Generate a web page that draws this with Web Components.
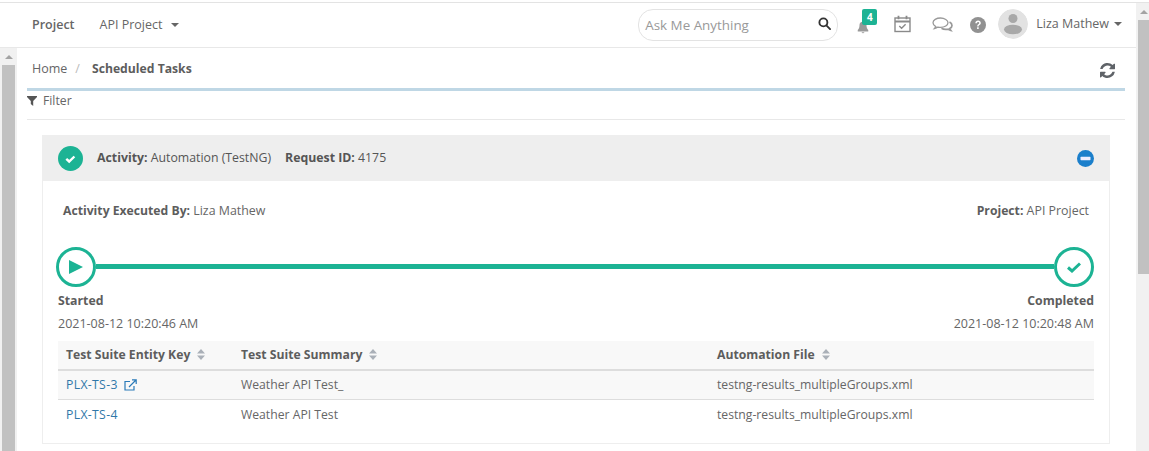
<!DOCTYPE html>
<html><head><meta charset="utf-8"><title>Scheduled Tasks</title>
<style>
html,body{margin:0;padding:0;height:451px;overflow:hidden;background:#fff}
body{font:12.2px/1.4 "Open Sans",sans-serif;color:#666}
</style></head><body>
<app-shell></app-shell>
<script>
function def(name,html){
  customElements.define(name,class extends HTMLElement{
    constructor(){super();this.attachShadow({mode:'open'}).innerHTML=html;}
  });
}
def('scroll-bar',`<style>
:host{display:flex;flex-direction:column;align-items:center;background:#f1f1f1;width:var(--w,13px);flex:none;box-sizing:border-box;padding:var(--p,0 2px)}
.arrow{height:17px;flex:none;display:flex;align-items:center;justify-content:center}
.arrow i{border:4px solid transparent;border-top:0;border-bottom:4px solid #a3a3a3;width:0;height:0;display:block}
.thumb{background:#c1c1c1;width:100%;height:var(--h,100px)}
</style><div class="arrow"><i></i></div><div class="thumb"></div>`);

def('top-bar',`<style>
:host{display:flex;align-items:center;height:44px;border-bottom:1px solid #e8e8e8;box-sizing:content-box;color:#666;font-size:12.5px}
b{font-weight:600;margin-left:32px;color:#666}
.proj{margin-left:25px;display:flex;align-items:center;gap:8px}
.caret{width:0;height:0;border:4px solid transparent;border-top:4px solid #666;border-bottom:0;display:block}
.sp{flex:1}
.search{width:192px;height:30px;border:1px solid #e3e3e3;border-radius:15px;display:flex;align-items:center;padding:0 0 0 6px;font-size:13.4px;color:#999;justify-content:space-between;box-sizing:content-box}
.search svg{margin-right:6px;margin-top:-3px}
.bell{position:relative;margin-left:18px;width:14px;height:14px;margin-top:4px}
.bell svg{display:block}
.badge{position:absolute;left:6px;top:-11px;width:15px;height:16px;background:#1cb394;color:#fff;font-size:10px;font-weight:700;border-radius:2px;text-align:center;line-height:16px}
.avatar{width:30px;height:30px;border-radius:50%;margin-left:12px;margin-bottom:2px;display:block}
.user{margin-left:8px;display:flex;align-items:center;gap:5px;margin-right:14px;margin-bottom:2px}
</style>
<b>Project</b>
<span class="proj">API Project <i class="caret"></i></span>
<span class="sp"></span>
<span class="search"><span>Ask Me Anything</span>
<svg width="13" height="13" viewBox="0 0 14 14" fill="none" stroke="#333" stroke-width="2"><circle cx="5.800" cy="5.800" r="4.300"/><path d="M9 9l4 4" stroke-linecap="round"/></svg></span>
<span class="bell"><svg width="14" height="14" viewBox="0 0 16 16" fill="#999"><path d="M8 1c-.6 0-1 .4-1 1C4.800 2.500 4 4 4 6c0 3-1 4.500-2 5.500V13h12v-1.500C13 10.500 12 9 12 6c0-2-.8-3.500-3-4 0-.6-.4-1-1-1zM6.300 14a1.800 1.800 0 0 0 3.400 0z"/></svg><span class="badge">4</span></span>
<svg style="margin-left:24px;margin-bottom:2px;display:block" width="17" height="18" viewBox="0 0 17 18" fill="none" stroke="#8a8a8a" stroke-width="1.400"><rect x="1" y="3" width="15" height="13.500"/><path d="M1 6.500h15" stroke-width="2"/><path d="M4.500 .8v3.400M12.500 .8v3.400" stroke-width="1.800"/><path d="M5.300 11l2.300 2.300 4-4"/></svg>
<svg style="margin-left:21px;margin-bottom:1px;display:block" width="21" height="16" viewBox="0 0 21 16" fill="none" stroke="#999" stroke-width="1.300"><path d="M8.500 1C4.400 1 1 3.100 1 5.800c0 1.600 1.100 2.900 2.800 3.800-.3.800-.7 1.300-1.300 1.900 1.300-.2 2.500-.7 3.400-1.400.8.200 1.700.3 2.600.3 4.100 0 7.500-2.100 7.500-4.600S12.600 1 8.500 1z"/><path d="M17.500 5c1.500.8 2.500 2 2.500 3.400 0 1.300-.9 2.500-2.300 3.200.2.700.5 1.200 1 1.800-1.100-.2-2.100-.6-2.800-1.200-.7.200-1.400.2-2.100.2-1.700 0-3.200-.4-4.300-1.100" stroke-width="1.700"/></svg>
<svg style="margin-left:17px;display:block" width="16" height="16" viewBox="0 0 16 16"><circle cx="8" cy="8" r="8" fill="#919191"/><path d="M5.300 6.200C5.400 4.600 6.500 3.600 8.100 3.600c1.600 0 2.700 1 2.700 2.300 0 1-.6 1.600-1.300 2.100-.7.500-.9.700-.9 1.500H7.200c0-1.200.3-1.800 1.100-2.300.6-.4.900-.7.900-1.200 0-.6-.5-1-1.100-1-.7 0-1.100.4-1.200 1.200zM7.100 10.300h1.600v1.800H7.100z" fill="#fff"/></svg>
<svg class="avatar" viewBox="0 0 30 30"><circle cx="15" cy="15" r="15" fill="#e2e2e2"/><circle cx="15" cy="9.500" r="4.500" fill="#a8a8a8"/><ellipse cx="15" cy="20.500" rx="9" ry="4.800" fill="#a8a8a8"/></svg>
<span class="user">Liza Mathew <i class="caret"></i></span>`);

def('bread-crumb',`<style>
:host{display:flex;align-items:center;height:39px;padding:1px 10px 0 5px;border-bottom:3px solid #bfd7e5;color:#666;font-size:12.5px}
.sep{color:#bbb;margin:0 12px 0 8px}
b{font-weight:700;color:#5d5d5d;font-size:12.2px}
.sp{flex:1}
svg{display:block;margin-top:3px}
</style><span>Home</span><span class="sep">/</span><b>Scheduled Tasks</b><span class="sp"></span>
<svg width="15" height="15" viewBox="0 0 1536 1536" fill="#5f6368"><path d="M1511 928q0 5-1 7-64 268-268 434.500T764 1536q-146 0-282.500-55T238 1324l-129 129q-19 19-45 19t-45-19-19-45V960q0-26 19-45t45-19h448q26 0 45 19t19 45-19 45L420 1142q71 66 161 102t187 36q134 0 250-65t186-179q11-17 53-117 8-23 30-23h192q13 0 22.500 9.500t9.500 22.500zM1536 128v448q0 26-19 45t-45 19h-448q-26 0-45-19t-19-45 19-45l138-138q-148-137-349-137-134 0-250 65T332 480q-11 17-53 117-8 23-30 23H50q-13 0-22.500-9.500T18 588v-7q65-268 270-434.500T768 0q146 0 284 55.500T1297 212l130-129q19-19 45-19t45 19 19 45z"/></svg>`);

def('filter-bar',`<style>
:host{display:flex;gap:6px;height:29px;border-bottom:1px solid #e8e8e8;box-sizing:border-box;color:#666;font-size:12.2px;align-items:flex-start;padding-top:1px}
svg{margin-top:4px;display:block}
</style><svg width="10" height="10" viewBox="0 0 10 10" fill="#555"><path d="M0 0h10v1L6.200 5v5L3.800 8V5L0 1z"/></svg><span>Filter</span>`);

def('activity-head',`<style>
:host{display:flex;align-items:center;height:46px;background:#eeeeee;padding:0 15px;color:#555;font-size:12.3px}
b{font-weight:700;color:#555}
.chk{margin-right:14px;display:block}
.gap{margin-left:14px}
.sp{flex:1}
</style><svg class="chk" width="25" height="25" viewBox="0 0 25 25"><circle cx="12.500" cy="12.500" r="12.500" fill="#1cb394"/><path d="M8.300 12.800l2.900 2.700 5.200-5" fill="none" stroke="#fff" stroke-width="2.400"/></svg>
<span><b>Activity:</b> Automation (TestNG)</span><span class="gap"><b>Request ID:</b> 4175</span><span class="sp"></span>
<svg width="17" height="17" viewBox="0 0 17 17"><circle cx="8.500" cy="8.500" r="8.500" fill="#1b7fcb"/><rect x="3.500" y="6.800" width="10" height="3.400" rx=".6" fill="#eef"/></svg>`);

def('time-line',`<style>
:host{display:block;color:#666;font-size:12.5px}
.track{display:flex;align-items:center;margin-left:-2px}
.node{width:34px;height:34px;border:3px solid #1cb394;border-radius:50%;background:#fff;flex:none;display:flex;align-items:center;justify-content:center}
.bar{flex:1;height:5px;background:#1cb394;margin-bottom:1px}
.labels,.dates{display:flex;justify-content:space-between}
.labels{font-weight:700;font-size:12.3px;color:#5d5d5d;margin-top:5px;height:17px;line-height:17px}
.dates{margin-top:6px;height:17px;line-height:17px}
</style><div class="track"><span class="node"><svg width="14" height="14" viewBox="0 0 14 14"><path d="M0 0l14 7L0 14z" fill="#1cb394"/></svg></span><span class="bar"></span>
<span class="node"><svg width="14" height="11" viewBox="0 0 14 11"><path d="M1 5.500l4 3.500L13 1.500" fill="none" stroke="#1cb394" stroke-width="3"/></svg></span></div>
<div class="labels"><span>Started</span><span>Completed</span></div>
<div class="dates"><span>2021-08-12 10:20:46 AM</span><span>2021-08-12 10:20:48 AM</span></div>`);

const sort=`<svg width="8" height="11" viewBox="0 0 8 11" fill="#aab0b8" style="margin-left:7px"><path d="M4 0l4 4.500H0zM4 11L0 6.500h8z"/></svg>`;
def('suite-table',`<style>
:host{display:block;font-size:12.2px;color:#666}
.row{display:grid;grid-template-columns:175px 476px 1fr;align-items:center;padding-left:8px}
.head{height:28px;background:#f8f8f8;border-bottom:2px solid #ddd;font-weight:700;color:#5d5d5d}
.head span{display:flex;align-items:center}
.r{height:28px;border-bottom:1px solid #ddd}
.a{background:#f8f8f8}
.r.z{border-bottom:0;padding-top:1px}
a{color:#2f77a8;text-decoration:none;display:flex;align-items:center;gap:6px;letter-spacing:.35px}
</style>
<div class="row head"><span>Test Suite Entity Key${sort}</span><span>Test Suite Summary${sort}</span><span>Automation File${sort}</span></div>
<div class="row r a"><a>PLX-TS-3 <svg width="13" height="12" viewBox="0 0 13 12" fill="none" stroke="#2a7ab8" stroke-width="1.200"><path d="M10 7v4H1V2.500h5"/><path d="M5 8l7-7M8 .8h4.200V5"/></svg></a><span>Weather API Test_</span><span>testng-results_multipleGroups.xml</span></div>
<div class="row r z"><a>PLX-TS-4</a><span>Weather API Test</span><span>testng-results_multipleGroups.xml</span></div>`);

def('activity-card',`<style>
:host{display:block;border:1px solid #eee;border-top:0;margin:15px 15px 0;height:308px;box-sizing:content-box}
.body{padding:0 15px}
.meta{display:flex;justify-content:space-between;padding:21px 5px 0 5px;height:36px;line-height:17px;font-size:12.4px;color:#666}
b{font-weight:700;color:#5d5d5d;font-size:12.2px}
time-line{margin-top:9px}
suite-table{margin-top:9px}
</style>
<activity-head></activity-head>
<div class="body">
<div class="meta"><span><b>Activity Executed By:</b> Liza Mathew</span><span><b>Project:</b> API Project</span></div>
<time-line></time-line>
<suite-table></suite-table>
</div>`);

def('app-shell',`<style>
:host{display:flex;flex-direction:column;height:451px;overflow:hidden}
.line{height:1px;margin-top:2px;background:#e3e3e3;flex:none}
.w{display:flex;flex:1;min-height:0}
.main{flex:1;display:flex;flex-direction:column;min-width:0}
.mid{flex:1;display:flex;min-height:0}
.content{flex:1;min-width:0;padding:0 11px 0 10px;box-sizing:border-box}
.r{--w:13px;--h:254px;--p:0 0 0 2px}
.l{--w:17px;--h:400px}
</style>
<div class="line"></div>
<div class="w"><div class="main"><top-bar></top-bar>
<div class="mid"><scroll-bar class="l"></scroll-bar><div class="content"><bread-crumb></bread-crumb><filter-bar></filter-bar><activity-card></activity-card></div></div></div>
<scroll-bar class="r"></scroll-bar></div>`);
</script>
</body></html>
